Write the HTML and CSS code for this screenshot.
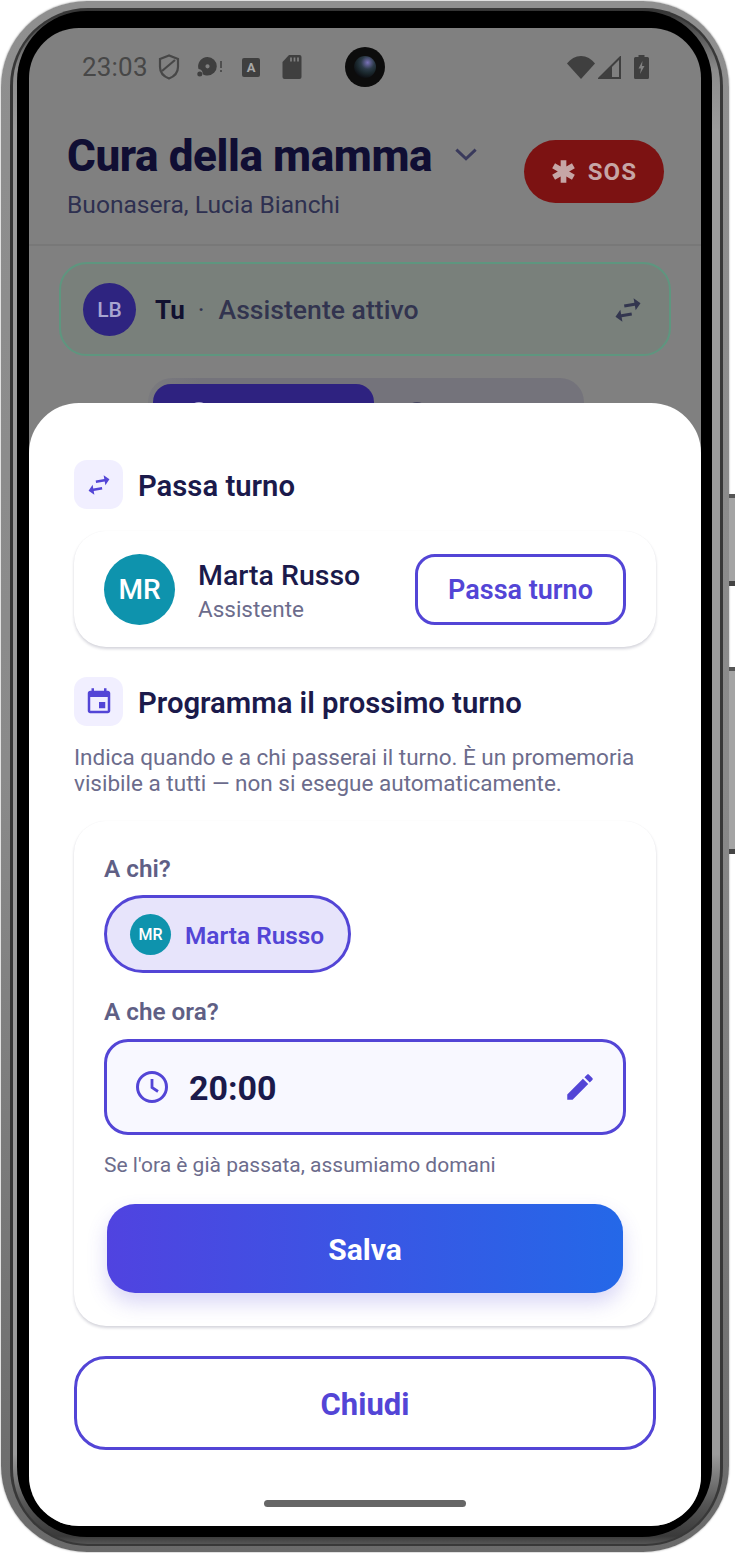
FILE: index.html
```html
<!DOCTYPE html>
<html lang="it">
<head>
<meta charset="utf-8">
<title>Cura della mamma</title>
<link rel="stylesheet" href="styles.css">
</head>
<body>
<div class="shell">
  <span class="side-btn side-btn-a"></span>
  <span class="side-btn side-btn-b"></span>
  <div class="rim">
    <div class="ring">
      <div class="bezel">
        <div class="screen">
          <div class="camera"><span class="lens"></span></div>
          <div class="status">
            <span class="time">23:03</span>
            <svg class="ic-shield" viewBox="0 0 22 26"><path d="M11 1.500 2 5v8c0 5.500 3.800 9.500 9 11.500 5.200-2 9-6 9-11.500V5z" fill="none" stroke="currentColor" stroke-width="2.200"/><path d="M4 17 17 6" stroke="currentColor" stroke-width="2.200"/></svg>
            <svg class="ic-disc" viewBox="0 0 26 20"><path fill-rule="evenodd" d="M10.500 0a9.300 9.300 0 0 1 0 18.600c-1.800 0-3.400-.5-4.800-1.300A5 5 0 0 0 1.500 12 9.300 9.300 0 0 1 10.500 0zm0 7.200a2.100 2.100 0 1 0 0 4.200 2.100 2.100 0 0 0 0-4.200z" fill="currentColor"/><circle cx="2.800" cy="17" r="2.500" fill="currentColor"/><path d="M24 4v7M24 13v2" stroke="currentColor" stroke-width="1.500"/></svg>
            <span class="ic-a">A</span>
            <svg class="ic-sd" viewBox="0 0 20 24"><path d="M7 0h10.500A2 2 0 0 1 19.500 2v20a2 2 0 0 1-2 2H2.500a2 2 0 0 1-2-2V7z" fill="currentColor"/><path d="M9 2.500v4M12.500 2.500v4M16 2.500v4" stroke="#808080" stroke-width="1.700"/></svg>
            <span class="status-gap"></span>
            <svg class="ic-wifi" viewBox="0 0 28 23"><path d="M14 23 0 7.500C3.500 3 8.500 0 14 0s10.500 3 14 7.500z" fill="currentColor"/></svg>
            <svg class="ic-signal" viewBox="0 0 23 23"><path d="M22 1.500V22H1.500z" fill="none" stroke="currentColor" stroke-width="2"/><path d="M14 10v12H2.500z" fill="currentColor"/></svg>
            <svg class="ic-battery" viewBox="0 0 15 24"><path d="M4.500 0h6v2h3a1.500 1.500 0 0 1 1.500 1.500v19a1.500 1.500 0 0 1-1.500 1.500h-12A1.500 1.500 0 0 1 0 22.500v-19A1.500 1.500 0 0 1 1.500 2h3z" fill="currentColor"/><path d="M8.500 6 4.500 13.500h2.500L6 19l4.500-8H8z" fill="#808080"/></svg>
          </div>
          <header class="top">
            <div class="top-text">
              <div class="top-title-row">
                <h1 class="top-title">Cura della mamma</h1>
                <svg class="chevron" viewBox="0 0 24 14"><path d="M3 2.500 12 11l9-8.500" fill="none" stroke="currentColor" stroke-width="2.800"/></svg>
              </div>
              <p class="top-sub">Buonasera, Lucia Bianchi</p>
            </div>
            <div class="sos">
              <svg class="sos-star" viewBox="0 0 22 22"><path d="M11 1v20M2.300 6l17.400 10M19.700 6 2.300 16" stroke="currentColor" stroke-width="5"/></svg>
              <span>SOS</span>
            </div>
          </header>
          <div class="tu-card">
            <span class="tu-avatar">LB</span>
            <span class="tu-name">Tu</span>
            <span class="tu-dot">·</span>
            <span class="tu-role">Assistente attivo</span>
            <svg class="tu-swap" viewBox="0 0 24 24"><g transform="rotate(-10 12 12)"><path fill="currentColor" d="M6.990 11 3 15l3.990 4v-3H14v-2H6.990zM21 9l-3.990-4v3H10v2h7.010v3z"/></g></svg>
          </div>
          <div class="tabs">
            <div class="tab tab-active"><span class="tab-icon"></span></div>
            <div class="tab"><span class="tab-icon tab-icon-dim"></span></div>
          </div>

          <section class="sheet">
            <div class="sec-head">
              <span class="tile"><svg class="tile-ic" viewBox="0 0 24 24"><g transform="rotate(-10 12 12)"><path fill="currentColor" d="M6.990 11 3 15l3.990 4v-3H14v-2H6.990zM21 9l-3.990-4v3H10v2h7.010v3z"/></g></svg></span>
              <h2 class="sec-title">Passa turno</h2>
            </div>
            <div class="card person">
              <span class="avatar avatar-lg">MR</span>
              <div class="person-text">
                <div class="person-name">Marta Russo</div>
                <div class="person-role">Assistente</div>
              </div>
              <div class="btn-outline-sm">Passa turno</div>
            </div>
            <div class="sec-head sec-head-2">
              <span class="tile"><svg class="tile-ic" viewBox="0 0 24 24"><path fill="currentColor" d="M17 12h-5v5h5zM16 1v2H8V1H6v2H5c-1.110 0-1.990.9-1.990 2L3 19c0 1.100.89 2 2 2h14c1.100 0 2-.9 2-2V5c0-1.100-.9-2-2-2h-1V1zm3 18H5V8h14z"/></svg></span>
              <h2 class="sec-title">Programma il prossimo turno</h2>
            </div>
            <p class="desc">Indica quando e a chi passerai il turno. È un promemoria visibile a tutti — non si esegue automaticamente.</p>
            <div class="card form">
              <div class="label">A chi?</div>
              <div class="chip">
                <span class="avatar avatar-sm">MR</span>
                <span class="chip-name">Marta Russo</span>
              </div>
              <div class="label label-2">A che ora?</div>
              <div class="time-field">
                <svg class="ic-clock" viewBox="0 0 32 32"><circle cx="16" cy="16" r="14.500" fill="none" stroke="currentColor" stroke-width="3"/><path d="M16 8v8.500l6 4" fill="none" stroke="currentColor" stroke-width="2.800"/></svg>
                <span class="time-value">20:00</span>
                <svg class="ic-edit" viewBox="0 0 24 24"><path fill="currentColor" d="M3 17.250V21h3.750L17.810 9.940l-3.750-3.750zM20.710 7.040c.39-.39.39-1.020 0-1.410l-2.340-2.340c-.39-.39-1.020-.39-1.410 0l-1.830 1.830 3.750 3.750z"/></svg>
              </div>
              <p class="hint">Se l'ora è già passata, assumiamo domani</p>
              <div class="btn-save">Salva</div>
            </div>
            <div class="btn-close">Chiudi</div>
            <div class="home-bar"></div>
          </section>
        </div>
      </div>
    </div>
  </div>
</div>
</body>
</html>
```
FILE: styles.css
```css
* { box-sizing: border-box; }
html, body { margin: 0; padding: 0; background: #fff; }
body { width: 735px; height: 1553px; overflow: hidden; font-family: Roboto, "Liberation Sans", sans-serif; padding: 1px 0 0 1px; }
h1, h2, p { margin: 0; }

/* device frame */
.shell { position: relative; width: 728px; height: 1551px; border-radius: 86px; background: linear-gradient(#8f8f8f 0, #8a8a8a 50%, #6a6a6a 100%); padding: 7px 6px 6px 9px; box-shadow: 0 0 2px rgba(0,0,0,.45); }
.side-btn { position: absolute; left: 728px; width: 6px; background: #a4a4a4; border-top: 4px solid #555; border-bottom: 5px solid #444; }
.side-btn-a { top: 493px; height: 92px; }
.side-btn-b { top: 666px; height: 187px; }
.rim { height: 100%; border-radius: 78px; background: #383838; padding: 2px 3px; }
.ring { height: 100%; border-radius: 75px; background: linear-gradient(#333 0, #8c8c8c 60px, #9c9c9c 120px, #9c9c9c calc(100% - 90px), #555 calc(100% - 40px), #3a3a3a calc(100% - 8px), #555 100%); padding: 1px 8px 7px 4px; }
.bezel { height: 100%; border-radius: 70px; background: #000; padding: 17px 11px 11px 12px; }
.screen { position: relative; height: 1498px; overflow: hidden; border-radius: 50px; background: #808080; }

/* camera */
.camera { position: absolute; left: 316px; top: 19px; width: 40px; height: 40px; border-radius: 50%; background: #0c0c0c; display: flex; align-items: center; justify-content: center; }
.lens { width: 22px; height: 22px; border-radius: 50%; background: radial-gradient(circle at 62% 30%, #7a72b8 0, #2c3a48 32%, #1c2a30 50%, #0a0a0e 80%); }

/* status bar */
.status { display: flex; align-items: center; height: 78px; padding: 0 52px 0 53px; color: #3f3f3f; }
.time { font-size: 26px; color: #474747; width: 76px; letter-spacing: .2px; }
.ic-shield { width: 22px; height: 26px; color: #474747; }
.ic-disc { width: 26px; height: 20px; margin-left: 17px; }
.ic-a { width: 18px; height: 19px; margin-left: 19px; background: #3f3f3f; color: #a8a8a8; font: 700 13px/19px Roboto, sans-serif; text-align: center; border-radius: 2px; }
.ic-sd { width: 20px; height: 24px; margin-left: 22px; }
.status-gap { flex: 1; }
.ic-wifi { width: 28px; height: 23px; }
.ic-signal { width: 23px; height: 23px; margin-left: 3px; }
.ic-battery { width: 15px; height: 24px; margin-left: 13px; }

/* header */
.top { display: flex; justify-content: space-between; align-items: flex-start; height: 140px; padding: 24px 37px 0 38px; border-bottom: 2px solid #787878; }
.top-title-row { display: flex; align-items: center; gap: 21px; height: 52px; }
.top-title { font-size: 44px; line-height: 52px; font-weight: 800; color: #100e33; letter-spacing: -.4px; white-space: nowrap; }
.chevron { width: 26px; height: 15px; color: #3a3a5c; margin-top: -4px; }
.top-sub { font-size: 24.600px; line-height: 30px; color: #2e3050; margin-top: 8px; }
.sos { display: flex; align-items: center; justify-content: center; gap: 12px; width: 140px; height: 63px; margin-top: 10px; border-radius: 32px; background: #7c1212; color: #c6a6a6; font-size: 24px; font-weight: 700; letter-spacing: 1.200px; }
.sos-star { width: 25px; height: 25px; }

/* active card */
.tu-card { display: flex; align-items: center; height: 94px; margin: 16px 30px 0; padding: 1px 23px 0 22px; border-radius: 28px; background: #79807b; border: 2px solid #5e967f; }
.tu-avatar { width: 53px; height: 53px; border-radius: 50%; background: #2e2480; color: #a9a6d0; font-size: 21px; font-weight: 500; display: flex; align-items: center; justify-content: center; }
.tu-name { margin-left: 19px; font-size: 26px; font-weight: 700; color: #111130; }
.tu-dot { margin-left: 13px; font-size: 26px; color: #32344f; }
.tu-role { margin-left: 14px; font-size: 26.600px; font-weight: 500; color: #32344f; }
.tu-swap { width: 36px; height: 36px; margin-left: auto; color: #33364f; }

/* tabs, mostly covered by the sheet */
.tabs { display: flex; gap: 4px; width: 436px; height: 84px; margin: 22px 0 0 119px; padding: 6px 10px 6px 5px; border-radius: 24px; background: linear-gradient(90deg, #7a7a7e 0, #74737b 12%); }
.tab { flex: 1; border-radius: 18px; display: flex; justify-content: center; padding: 18px 130px 0 0; }
.tab-active { background: #2e2280; flex: 0 0 221px; }
.tab-icon { width: 24px; height: 24px; border: 3px solid #b0aed0; border-radius: 50%; }
.tab-icon-dim { border-color: #44445f; margin-left: 12px; }

/* bottom sheet */
.sheet { position: absolute; left: 0; right: 0; bottom: 0; height: 1123px; padding: 57px 45px 0; border-radius: 50px 50px 0 0; background: #fff; }
.sec-head { display: flex; align-items: center; gap: 15px; height: 49px; }
.sec-head-2 { margin-top: 30px; }
.tile { width: 49px; height: 49px; border-radius: 13px; background: #f1efff; display: flex; align-items: center; justify-content: center; color: #5345d6; }
.tile-ic { width: 30px; height: 30px; }
.sec-title { padding-top: 2px; font-size: 29.250px; line-height: 36px; font-weight: 600; color: #1b1a4b; white-space: nowrap; }
.card { border-radius: 32px; background: #fff; box-shadow: 0 2px 3px rgba(20,20,60,.18), 0 0 1px rgba(20,20,60,.05); }
.person { display: flex; align-items: center; height: 116px; margin-top: 22px; padding: 0 30px; }
.avatar { border-radius: 50%; background: #0e93ad; color: #fff; font-weight: 500; display: flex; align-items: center; justify-content: center; flex: none; }
.avatar-lg { width: 71px; height: 71px; font-size: 28px; }
.avatar-sm { width: 41px; height: 41px; font-size: 16px; }
.person-text { margin-left: 23px; flex: 1; padding-top: 4px; }
.person-name { font-size: 28.500px; line-height: 34px; font-weight: 500; color: #1b1a4b; }
.person-role { font-size: 22.500px; line-height: 30px; margin-top: 1px; color: #6c6c8c; }
.btn-outline-sm { width: 211px; height: 71px; padding-top: 2px; border: 3px solid #5345d6; border-radius: 20px; display: flex; align-items: center; justify-content: center; color: #5345d6; font-size: 27px; font-weight: 600; }
.desc { margin-top: 18px; font-size: 22.500px; line-height: 26px; color: #6c6c8c; }
.form { height: 505px; margin-top: 25px; padding: 30px 30px 0; }
.label { font-size: 24.300px; line-height: 36px; font-weight: 600; color: #5f5f85; }
.label-2 { margin-top: 21px; }
.chip { display: flex; align-items: center; width: 247px; height: 78px; margin-top: 8px; padding-left: 23px; border: 3px solid #5345d6; border-radius: 39px; background: #e7e4fb; }
.chip-name { margin-left: 14px; font-size: 24.400px; padding-top: 2px; font-weight: 600; color: #5345d6; }
.time-field { display: flex; align-items: center; height: 96px; margin-top: 9px; padding: 0 26px 0 29px; border: 3px solid #5345d6; border-radius: 24px; background: #f8f8ff; color: #5345d6; }
.ic-clock { width: 32px; height: 32px; }
.time-value { margin-left: 21px; padding-top: 2px; font-size: 34px; font-weight: 700; color: #1b1a4b; }
.ic-edit { width: 34px; height: 34px; margin-left: auto; }
.hint { margin-top: 16px; font-size: 21px; line-height: 28px; color: #6c6c8c; }
.btn-save { height: 89px; margin: 25px 3px 0; padding-top: 2px; border-radius: 28px; background: linear-gradient(90deg, #5043e0, #2468e8); color: #fff; font-size: 30px; font-weight: 700; display: flex; align-items: center; justify-content: center; box-shadow: 0 10px 20px rgba(83,69,214,.22); }
.btn-close { height: 94px; margin-top: 30px; padding-top: 2px; border: 3px solid #5345d6; border-radius: 32px; display: flex; align-items: center; justify-content: center; color: #5345d6; font-size: 31px; font-weight: 700; }
.home-bar { width: 202px; height: 7px; margin: 50px auto 0; border-radius: 4px; background: #666; }
```
